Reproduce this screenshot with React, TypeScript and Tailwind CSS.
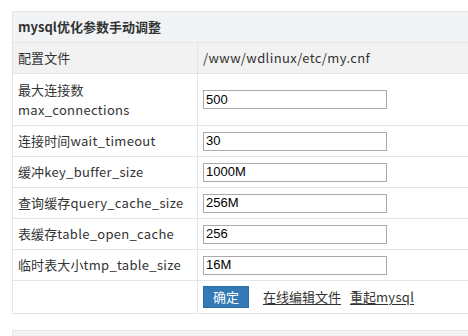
import React from "react";

const font = { fontFamily: '"Noto Sans CJK SC", "Noto Sans", sans-serif' };
const inputFont = { fontFamily: '"Liberation Sans", Arial, sans-serif' };

function L({ cn, en }: { cn: string; en: string }) {
  return (
    <span>
      <span className="tracking-[0.1px]">{cn}</span>
      <span className="tracking-[0.3px]">{en}</span>
    </span>
  );
}

function Row({ label, value, tall }: { label: React.ReactNode; value: string; tall?: boolean }) {
  return (
    <div className={`flex border-b border-[#e4e5e9] ${tall ? "h-[52px]" : "h-[31px]"}`}>
      <div className="w-[185px] shrink-0 border-r border-[#e4e5e9] pl-[5px] flex items-center text-[13px] text-[#333] leading-[20px] whitespace-nowrap">
        {label}
      </div>
      <div className="flex-1 pl-[5px] flex items-center">
        <input
          readOnly
          value={value}
          style={inputFont}
          className="w-[184px] h-[19px] border border-[#a9a9a9] px-[2px] text-[13px] text-black bg-white outline-none"
        />
      </div>
    </div>
  );
}

export default function App() {
  return (
    <div className="w-[468px] h-[336px] overflow-hidden bg-white pt-[11px] pl-[12px]" style={font}>
      <div className="w-[470px] border-t border-l border-[#e4e5e9]">
        <div className="h-[31px] bg-[#f2f3f5] border-b border-[#e4e5e9] pl-[5px] flex items-center text-[13px] font-bold text-[#333]">
          mysql优化参数手动调整
        </div>
        <div className="flex h-[31px] bg-[#f2f2f2] border-b border-[#e4e5e9]">
          <div className="w-[185px] shrink-0 border-r border-[#e4e5e9] pl-[5px] flex items-center text-[13px] text-[#333] tracking-[0.1px]">
            配置文件
          </div>
          <div className="flex-1 pl-[5px] flex items-center text-[13px] text-[#333] tracking-[0.4px]">
            /www/wdlinux/etc/my.cnf
          </div>
        </div>
        <Row
          tall
          label={
            <div className="flex flex-col">
              <span className="tracking-[0.1px]">最大连接数</span>
              <span className="tracking-[0.3px]">max_connections</span>
            </div>
          }
          value="500"
        />
        <Row label={<L cn="连接时间" en="wait_timeout" />} value="30" />
        <Row label={<L cn="缓冲" en="key_buffer_size" />} value="1000M" />
        <Row label={<L cn="查询缓存" en="query_cache_size" />} value="256M" />
        <Row label={<L cn="表缓存" en="table_open_cache" />} value="256" />
        <Row label={<L cn="临时表大小" en="tmp_table_size" />} value="16M" />
        <div className="flex h-[33px] border-b border-[#e4e5e9]">
          <div className="w-[185px] shrink-0 border-r border-[#e4e5e9]" />
          <div className="flex-1 pl-[5px] flex items-center text-[13px] text-[#333]">
            <button className="w-[46px] h-[22px] bg-[#337ab7] border border-[#2e6da4] text-white text-[13px] flex items-center justify-center">
              确定
            </button>
            <a className="ml-[14px] underline underline-offset-2">在线编辑文件</a>
            <a className="ml-[9px] underline underline-offset-2">
              重起<span className="tracking-[0.3px]">mysql</span>
            </a>
          </div>
        </div>
      </div>
      <div className="mt-[16px] w-[470px] h-[20px] bg-[#f2f3f5] border-t border-l border-[#e4e5e9]" />
    </div>
  );
}
